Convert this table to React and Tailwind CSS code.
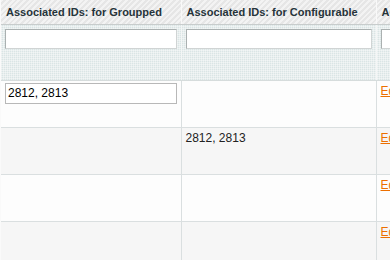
import React from "react";

const headBg =
  "bg-[repeating-linear-gradient(135deg,#f3f3f3_0px,#f3f3f3_2px,#e6e6e6_2px,#e6e6e6_4px)]";
const filterBg =
  "bg-[#dae5e5] bg-[linear-gradient(90deg,rgba(255,255,255,0.4)_1px,transparent_1px),linear-gradient(rgba(255,255,255,0.4)_1px,transparent_1px)] bg-[length:2px_2px]";

const rows = [
  { grouped: "2812, 2813", configurable: "", editable: true },
  { grouped: "", configurable: "2812, 2813" },
  { grouped: "", configurable: "" },
  { grouped: "", configurable: "" },
];

export default function App() {
  return (
    <div
      className="h-[260px] w-[390px] overflow-hidden bg-[#fafafa] pl-px"
      style={{ fontFamily: '"Liberation Sans", Arial, sans-serif' }}
    >
      <table className="w-[440px] table-fixed border-collapse text-[12px] text-[#2f2f2f]">
        <colgroup>
          <col className="w-[180px]" />
          <col className="w-[195px]" />
          <col className="w-[65px]" />
        </colgroup>
        <thead>
          <tr className={`h-[24px] ${headBg}`}>
            {["Associated IDs: for Groupped", "Associated IDs: for Configurable", "Action"].map((t) => (
              <th
                key={t}
                className="border-b border-r border-b-[#c8cccc] border-r-[#f9f9f9] px-[5px] pt-[2px] text-left align-middle text-[11px] font-bold leading-[13px] whitespace-nowrap text-[#26343a]"
              >
                {t}
              </th>
            ))}
          </tr>
          <tr className={`h-[56px] ${filterBg}`}>
            {[0, 1, 2].map((i) => (
              <th
                key={i}
                className="border-b border-r border-b-[#d6dcdc] border-r-[#f4f6f6] px-[4px] pt-[4px] align-top"
              >
                <input
                  className="block h-[20px] w-full border border-[#aab0b0] border-b-[#d0d4d4] border-r-[#d0d4d4] bg-white px-[2px] text-[12px] outline-none"
                  defaultValue=""
                />
              </th>
            ))}
          </tr>
        </thead>
        <tbody>
          {rows.map((r, i) => (
            <tr key={i} className={`h-[47px] ${i % 2 ? "bg-[#f6f6f6]" : "bg-[#fdfdfd]"}`}>
              <td className="border-b border-r border-[#dadfe0] px-[4px] pt-[2px] align-top leading-[15px]">
                {r.editable ? (
                  <input
                    className="block h-[21px] w-full border border-[#b8b8b8] bg-white px-[2px] text-[12px] text-black outline-none"
                    defaultValue={r.grouped}
                  />
                ) : (
                  r.grouped
                )}
              </td>
              <td className="border-b border-r border-[#dadfe0] px-[4px] pt-[3px] align-top leading-[15px] text-[#222]">
                {r.configurable}
              </td>
              <td className="border-b border-r border-[#dadfe0] px-[4px] pt-[3px] align-top leading-[15px]">
                <a href="#" className="text-[#ec6f00] underline">
                  Edit
                </a>
              </td>
            </tr>
          ))}
        </tbody>
      </table>
    </div>
  );
}
